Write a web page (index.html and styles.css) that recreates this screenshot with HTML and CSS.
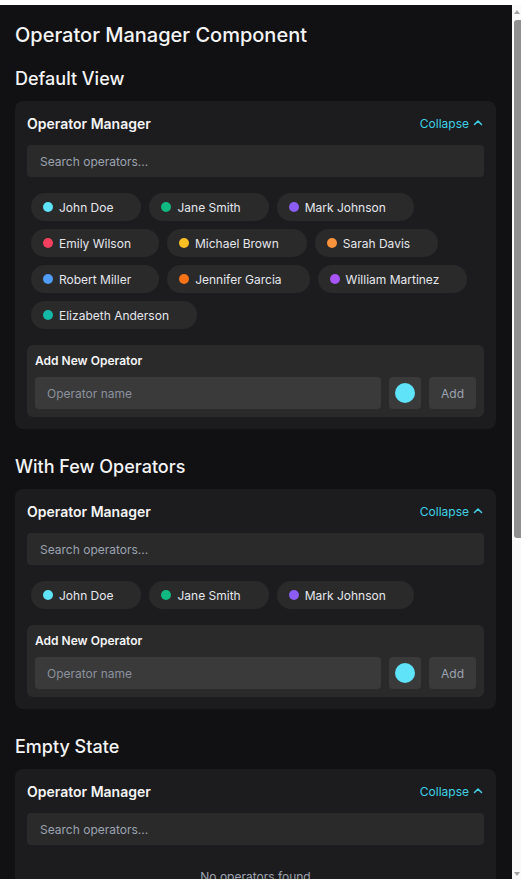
FILE: index.html
```html
<!DOCTYPE html>
<html>
<head>
<meta charset="utf-8">
<link rel="stylesheet" href="styles.css">
</head>
<body>
<div class="frame">
  <div class="page">
    <h1 class="title">Operator Manager Component</h1>

    <section class="section">
      <h2 class="section-title">Default View</h2>
      <div class="card">
        <div class="card-header">
          <span class="card-title">Operator Manager</span>
          <span class="collapse">Collapse
            <svg class="chev" viewBox="0 0 24 24" width="12" height="12"><polyline points="5 15 12 8 19 15" fill="none" stroke="currentColor" stroke-width="3" stroke-linecap="round" stroke-linejoin="round"/></svg>
          </span>
        </div>
        <div class="search">Search operators...</div>
        <div class="chips">
          <span class="chip"><i class="dot c-cyan"></i>John Doe</span>
          <span class="chip"><i class="dot c-green"></i>Jane Smith</span>
          <span class="chip"><i class="dot c-violet"></i>Mark Johnson</span>
          <span class="chip"><i class="dot c-rose"></i>Emily Wilson</span>
          <span class="chip"><i class="dot c-amber"></i>Michael Brown</span>
          <span class="chip"><i class="dot c-peach"></i>Sarah Davis</span>
          <span class="chip"><i class="dot c-blue"></i>Robert Miller</span>
          <span class="chip"><i class="dot c-orange"></i>Jennifer Garcia</span>
          <span class="chip"><i class="dot c-purple"></i>William Martinez</span>
          <span class="chip"><i class="dot c-teal"></i>Elizabeth Anderson</span>
        </div>
        <div class="add">
          <div class="add-label">Add New Operator</div>
          <div class="add-row">
            <div class="add-input">Operator name</div>
            <div class="color-btn"><i class="swatch"></i></div>
            <div class="add-btn">Add</div>
          </div>
        </div>
      </div>
    </section>

    <section class="section">
      <h2 class="section-title">With Few Operators</h2>
      <div class="card">
        <div class="card-header">
          <span class="card-title">Operator Manager</span>
          <span class="collapse">Collapse
            <svg class="chev" viewBox="0 0 24 24" width="12" height="12"><polyline points="5 15 12 8 19 15" fill="none" stroke="currentColor" stroke-width="3" stroke-linecap="round" stroke-linejoin="round"/></svg>
          </span>
        </div>
        <div class="search">Search operators...</div>
        <div class="chips">
          <span class="chip"><i class="dot c-cyan"></i>John Doe</span>
          <span class="chip"><i class="dot c-green"></i>Jane Smith</span>
          <span class="chip"><i class="dot c-violet"></i>Mark Johnson</span>
        </div>
        <div class="add">
          <div class="add-label">Add New Operator</div>
          <div class="add-row">
            <div class="add-input">Operator name</div>
            <div class="color-btn"><i class="swatch"></i></div>
            <div class="add-btn">Add</div>
          </div>
        </div>
      </div>
    </section>

    <section class="section">
      <h2 class="section-title">Empty State</h2>
      <div class="card">
        <div class="card-header">
          <span class="card-title">Operator Manager</span>
          <span class="collapse">Collapse
            <svg class="chev" viewBox="0 0 24 24" width="12" height="12"><polyline points="5 15 12 8 19 15" fill="none" stroke="currentColor" stroke-width="3" stroke-linecap="round" stroke-linejoin="round"/></svg>
          </span>
        </div>
        <div class="search">Search operators...</div>
        <div class="empty">No operators found</div>
        <div class="add">
          <div class="add-label">Add New Operator</div>
          <div class="add-row">
            <div class="add-input">Operator name</div>
            <div class="color-btn"><i class="swatch"></i></div>
            <div class="add-btn">Add</div>
          </div>
        </div>
      </div>
    </section>
  </div>
  <div class="scrollbar">
    <div class="arrow-up"></div>
    <div class="thumb"></div>
    <div class="track"></div>
    <div class="arrow-down"></div>
  </div>
</div>
</body>
</html>
```

FILE: styles.css
```css
html, body {
  margin: 0;
  padding: 0;
  background: #ffffff;
  overflow: hidden;
}
body {
  font-family: Inter, "Noto Sans", "Liberation Sans", sans-serif;
  color: #f4f4f5;
}
.frame {
  margin-top: 5px;
  display: flex;
  height: 874px;
  overflow: hidden;
}
.page {
  width: 512px;
  flex: none;
  background: #111113;
  padding: 16px 16px 0 15px;
  box-sizing: border-box;
  overflow: hidden;
}
.title {
  margin: 0 0 16px 0;
  font-size: 20px;
  line-height: 28px;
  font-weight: 500;
  color: #f4f4f5;
}
.section {
  margin-bottom: 24px;
}
.section-title {
  margin: 0 0 8px 0;
  font-size: 18px;
  line-height: 28px;
  font-weight: 500;
  color: #f4f4f5;
}
.card {
  background: #1c1c1e;
  border-radius: 8px;
  padding: 12px;
}
.card-header {
  display: flex;
  justify-content: space-between;
  align-items: center;
  height: 20px;
  margin-bottom: 12px;
}
.card-title {
  font-size: 14px;
  font-weight: 600;
  color: #f4f4f5;
}
.collapse {
  display: flex;
  align-items: center;
  gap: 3px;
  font-size: 12px;
  color: #3fd0e6;
}
.chev {
  display: block;
}
.search {
  height: 32px;
  box-sizing: border-box;
  background: #2a2a2b;
  border-radius: 4px;
  padding: 0 13px;
  display: flex;
  align-items: center;
  font-size: 12px;
  color: #9ca3af;
}
.chips {
  display: flex;
  flex-wrap: wrap;
  gap: 8px;
  margin-top: 16px;
  padding: 0 4px;
}
.chip {
  height: 28px;
  box-sizing: border-box;
  border-radius: 14px;
  background: #2a2a2b;
  display: flex;
  align-items: center;
  gap: 6px;
  padding: 0 28px 0 12px;
  font-size: 12px;
  color: #e5e7eb;
}
.dot {
  width: 10px;
  height: 10px;
  border-radius: 50%;
  flex: none;
}
.c-cyan { background: #5ee3f9; }
.c-green { background: #10b981; }
.c-violet { background: #8b5cf6; }
.c-rose { background: #f43f5e; }
.c-amber { background: #fbbf24; }
.c-peach { background: #fb923c; }
.c-blue { background: #4f9cf9; }
.c-orange { background: #f97316; }
.c-purple { background: #a855f7; }
.c-teal { background: #14b8a6; }
.add {
  margin-top: 16px;
  background: #2a2a2b;
  border-radius: 6px;
  padding: 8px;
}
.add-label {
  font-size: 12px;
  line-height: 16px;
  font-weight: 600;
  color: #f4f4f5;
  margin-bottom: 8px;
}
.add-row {
  display: flex;
  gap: 8px;
}
.add-input {
  flex: 1;
  height: 32px;
  box-sizing: border-box;
  background: #3a3a3b;
  border-radius: 4px;
  padding: 0 12px;
  display: flex;
  align-items: center;
  font-size: 12px;
  color: #8b919b;
}
.color-btn {
  width: 32px;
  height: 32px;
  border-radius: 4px;
  background: #3a3a3b;
  display: flex;
  align-items: center;
  justify-content: center;
  flex: none;
}
.swatch {
  width: 20px;
  height: 20px;
  border-radius: 50%;
  background: #5ee3f9;
}
.add-btn {
  width: 47px;
  height: 32px;
  border-radius: 4px;
  background: #3a3a3b;
  display: flex;
  align-items: center;
  justify-content: center;
  font-size: 12px;
  color: #9ca3af;
  flex: none;
}
.empty {
  text-align: center;
  font-size: 12px;
  line-height: 16px;
  color: #9ca3af;
  padding: 24px 0;
}
.scrollbar {
  width: 9px;
  flex: none;
  background: #fafafa;
  display: flex;
  flex-direction: column;
  align-items: flex-end;
}
.arrow-up {
  width: 0;
  height: 0;
  margin: 5px 1px 0 0;
  border-left: 3px solid transparent;
  border-right: 3px solid transparent;
  border-bottom: 4px solid #a3a3a3;
}
.thumb {
  margin-top: 6px;
  width: 7px;
  height: 518px;
  background: #909090;
  border-radius: 3px 0 0 3px;
}
.track {
  flex: 1;
}
.arrow-down {
  width: 0;
  height: 0;
  margin: 0 1px 3px 0;
  border-left: 3px solid transparent;
  border-right: 3px solid transparent;
  border-top: 4px solid #a3a3a3;
}
```
